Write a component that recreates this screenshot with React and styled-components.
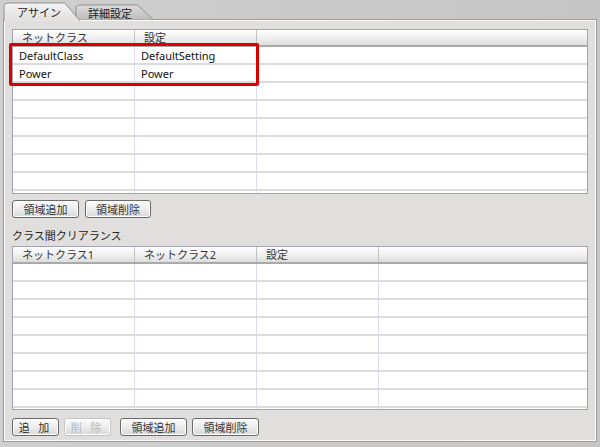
import styled, { createGlobalStyle } from "styled-components";

const GlobalStyle = createGlobalStyle`
  html, body {
    margin: 0;
    padding: 0;
  }
  body {
    font-family: "Noto Sans", "Noto Sans CJK JP", sans-serif;
    font-size: 11px;
    color: #222;
  }
`;

const Window = styled.div`
  width: 600px;
  height: 447px;
  box-sizing: border-box;
  padding: 3px 3px 5px 3px;
  background: linear-gradient(90deg, #cfcfcf, #c6c6c6);
  display: flex;
  flex-direction: column;
`;

const TabBar = styled.div`
  display: flex;
  height: 16px;
  padding-left: 1px;
  position: relative;
  z-index: 1;
`;

const TabShape = styled.svg`
  position: absolute;
  inset: 0;
  width: 100%;
  height: 100%;
  overflow: visible;
`;

const Tab = styled.div`
  position: relative;
  width: ${(p) => p.$w}px;
  height: ${(p) => (p.$active ? 17 : 14)}px;
  margin-top: ${(p) => (p.$active ? 0 : 2)}px;
  margin-left: ${(p) => (p.$active ? 0 : -4)}px;
  z-index: ${(p) => (p.$active ? 2 : 1)};
  display: flex;
  align-items: center;
  font-size: 11px;
  color: #222;

  span {
    position: relative;
    padding-left: ${(p) => (p.$active ? 13 : 12)}px;
    padding-top: ${(p) => (p.$active ? 0 : 1)}px;
  }
`;

const Panel = styled.div`
  flex: 1;
  background: #e1dfde;
  border: 1px solid #9c9c9c;
  box-shadow: inset 1px 1px 0 #fafafa, inset -1px -1px 0 #fafafa;
  padding: 9px 8px 0 8px;
  display: flex;
  flex-direction: column;
`;

const Table = styled.div`
  height: ${(p) => p.$h}px;
  box-sizing: border-box;
  border: 1px solid #a3a3b3;
  background: #fff;
  overflow: hidden;
  display: flex;
  flex-direction: column;
`;

const HeaderRow = styled.div`
  display: grid;
  grid-template-columns: ${(p) => p.$cols};
  height: 17px;
  flex: none;
  box-sizing: border-box;
  background: linear-gradient(#ffffff, #f2f2f2 45%, #dedede);
  border-bottom: 2px solid #a9a9a9;
`;

const HeaderCell = styled.div`
  border-right: 1px solid #c2c2c2;
  padding-left: 9px;
  line-height: 15px;
  color: #333;
  white-space: nowrap;
  overflow: hidden;
  &:last-child {
    border-right: none;
  }
`;

const Row = styled.div`
  display: grid;
  grid-template-columns: ${(p) => p.$cols};
  height: 18px;
  flex: none;
  box-sizing: border-box;
  border-bottom: 2px solid #dcdcdc;
`;

const Cell = styled.div`
  border-right: 1px solid #dcdaee;
  padding-left: 6px;
  line-height: 17px;
  white-space: nowrap;
  overflow: hidden;
  color: #111;
  &:last-child {
    border-right: none;
  }
`;

const AssignArea = styled.div`
  position: relative;
`;

const Highlight = styled.div`
  position: absolute;
  left: -3px;
  top: 14px;
  width: 250px;
  height: 43px;
  box-sizing: border-box;
  border: 3px solid #dc0000;
  border-radius: 2px;
  pointer-events: none;
`;

const ButtonRow = styled.div`
  display: flex;
  gap: ${(p) => p.$gap || 6}px;
  margin-top: ${(p) => p.$mt || 6}px;
  align-items: center;
`;

const Button = styled.button`
  width: ${(p) => p.$w}px;
  height: 18px;
  margin-left: ${(p) => p.$ml || 0}px;
  padding: 0;
  box-sizing: border-box;
  border: 1px solid ${(p) => (p.disabled ? "#c4c4c4" : "#6a6a6a")};
  border-radius: 3px;
  background: linear-gradient(#fdfdfd, #ececec 50%, #d9d9d9);
  box-shadow: inset 0 0 0 1px #ffffff;
  font-family: "Noto Sans CJK JP", sans-serif;
  font-size: 11px;
  line-height: 15px;
  letter-spacing: ${(p) => (p.$spaced ? "3px" : "0")};
  color: ${(p) => (p.disabled ? "#b8b8b8" : "#333")};
`;

const SectionLabel = styled.div`
  margin-top: 10px;
  height: 16px;
  line-height: 16px;
  font-size: 11px;
  color: #222;
`;

const COLS1 = "122px 122px 1fr";
const COLS2 = "122px 122px 122px 1fr";

const assignRows = [
  ["DefaultClass", "DefaultSetting", ""],
  ["Power", "Power", ""],
  ["", "", ""],
  ["", "", ""],
  ["", "", ""],
  ["", "", ""],
  ["", "", ""],
  ["", "", ""],
  ["", "", ""],
];

const clearanceRows = Array.from({ length: 9 }, () => ["", "", "", ""]);

const TabOutline = ({ active }) => (
  <TabShape viewBox="0 0 100 100" preserveAspectRatio="none">
    <defs>
      <linearGradient id={active ? "ta" : "ti"} x1="0" y1="0" x2="0" y2="1">
        <stop offset="0" stopColor={active ? "#f4f3f3" : "#dcdcdc"} />
        <stop offset="1" stopColor={active ? "#e1dfde" : "#bdbdbd"} />
      </linearGradient>
    </defs>
    <path
      d="M0 104 L0 14 Q0 0 8 0 L80 0 L100 104"
      fill={`url(#${active ? "ta" : "ti"})`}
      stroke="#8f8f8f"
      strokeWidth="1"
      vectorEffect="non-scaling-stroke"
    />
  </TabShape>
);

const App = () => {
  return (
    <>
      <GlobalStyle />
      <Window>
        <TabBar>
          <Tab $active $w={76}>
            <TabOutline active />
            <span>アサイン</span>
          </Tab>
          <Tab $w={77}>
            <TabOutline />
            <span>詳細設定</span>
          </Tab>
        </TabBar>
        <Panel>
          <AssignArea>
            <Table $h={165}>
              <HeaderRow $cols={COLS1}>
                <HeaderCell>ネットクラス</HeaderCell>
                <HeaderCell>設定</HeaderCell>
                <HeaderCell />
              </HeaderRow>
              {assignRows.map((r, i) => (
                <Row key={i} $cols={COLS1}>
                  {r.map((c, j) => (
                    <Cell key={j}>{c}</Cell>
                  ))}
                </Row>
              ))}
            </Table>
            <Highlight />
          </AssignArea>
          <ButtonRow>
            <Button $w={67}>領域追加</Button>
            <Button $w={66}>領域削除</Button>
          </ButtonRow>
          <SectionLabel>クラス間クリアランス</SectionLabel>
          <Table $h={164} style={{ marginTop: "2px" }}>
            <HeaderRow $cols={COLS2}>
              <HeaderCell>ネットクラス1</HeaderCell>
              <HeaderCell>ネットクラス2</HeaderCell>
              <HeaderCell>設定</HeaderCell>
              <HeaderCell />
            </HeaderRow>
            {clearanceRows.map((r, i) => (
              <Row key={i} $cols={COLS2}>
                {r.map((c, j) => (
                  <Cell key={j}>{c}</Cell>
                ))}
              </Row>
            ))}
          </Table>
          <ButtonRow $mt={8} $gap={5}>
            <Button $w={47} $spaced>追 加</Button>
            <Button $w={47} $spaced disabled>削 除</Button>
            <Button $w={67} $ml={4}>領域追加</Button>
            <Button $w={67}>領域削除</Button>
          </ButtonRow>
        </Panel>
      </Window>
    </>
  );
};

export default App;
